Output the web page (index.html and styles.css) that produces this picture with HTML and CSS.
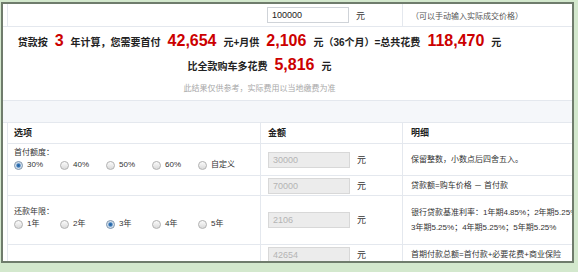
FILE: index.html
```html
<!DOCTYPE html>
<html lang="zh">
<head>
    <meta charset="UTF-8">
    <title>贷款购车计算</title>
    <link rel="stylesheet" href="styles.css">
</head>
<body>
    <div class="panel">
        <div class="top">
            <div></div>
            <div class="bl"></div>
            <div class="amount"><input class="price" type="text" value="100000"><span class="unit">元</span></div>
            <div class="bl tip">（可以手动输入实际成交价格）</div>
        </div>

        <div class="result">
            <p class="sum">贷款按<em>3</em>年计算，您需要首付<em>42,654</em>元+月供<em>2,106</em>元（36个月）=总共花费<em>118,470</em>元</p>
            <p class="more">比全款购车多花费<em>5,816</em>元</p>
            <p class="note">此结果仅供参考，实际费用以当地缴费为准</p>
        </div>

        <div class="band"></div>

        <table class="calc">
            <tr class="head">
                <td class="c1">选项</td>
                <td class="c2">金额</td>
                <td class="c3">明细</td>
            </tr>
            <tr class="r1">
                <td class="c1">
                    <div class="label">首付额度：</div>
                    <div class="opts">
                        <span class="opt"><i class="dot on"></i>30%</span>
                        <span class="opt"><i class="dot"></i>40%</span>
                        <span class="opt"><i class="dot"></i>50%</span>
                        <span class="opt"><i class="dot"></i>60%</span>
                        <span class="opt"><i class="dot"></i>自定义</span>
                    </div>
                </td>
                <td class="c2"><input class="val" type="text" value="30000" disabled><span class="unit">元</span></td>
                <td class="c3">保留整数，小数点后四舍五入。</td>
            </tr>
            <tr class="r2">
                <td class="c1"></td>
                <td class="c2"><input class="val" type="text" value="70000" disabled><span class="unit">元</span></td>
                <td class="c3">贷款额=购车价格 － 首付款</td>
            </tr>
            <tr class="r3">
                <td class="c1">
                    <div class="label">还款年限：</div>
                    <div class="opts">
                        <span class="opt"><i class="dot"></i>1年</span>
                        <span class="opt"><i class="dot"></i>2年</span>
                        <span class="opt"><i class="dot on"></i>3年</span>
                        <span class="opt"><i class="dot"></i>4年</span>
                        <span class="opt"><i class="dot"></i>5年</span>
                    </div>
                </td>
                <td class="c2"><input class="val" type="text" value="2106" disabled><span class="unit">元</span></td>
                <td class="c3 rate">
                    <div>银行贷款基准利率：1年期4.85%；2年期5.25%；</div>
                    <div>3年期5.25%；4年期5.25%；5年期5.25%</div>
                </td>
            </tr>
            <tr class="r4">
                <td class="c1"></td>
                <td class="c2"><input class="val" type="text" value="42654" disabled><span class="unit">元</span></td>
                <td class="c3">首期付款总额=首付款+必要花费+商业保险</td>
            </tr>
        </table>
    </div>
</body>
</html>
```

FILE: styles.css
```css
body {
    margin: 0;
    padding: 2px 0 0 1px;
    background-color: #d3e8cd;
    font-family: "Liberation Sans", "Noto Sans CJK SC", sans-serif;
    font-size: 8px;
    color: #333;
}
.panel {
    width: 573px;
    height: 261px;
    box-sizing: border-box;
    border: 2px solid #6f7c6c;
    background-color: #fff;
    overflow: hidden;
}
.top {
    display: grid;
    grid-template-columns: 4px 253px 142px 1fr;
    height: 22px;
    border-bottom: 1px solid #e4e8ee;
}
.top > div {
    display: flex;
    align-items: center;
}
.bl {
    border-left: 1px solid #e4e8ee;
}
.amount {
    padding-left: 7px;
}
.tip {
    padding-left: 8px;
    color: #555;
}
input {
    box-sizing: border-box;
    width: 82px;
    height: 16px;
    margin: 0;
    padding: 0 4px;
    font-family: "Liberation Sans", sans-serif;
    font-size: 9px;
}
.price {
    border: 1px solid #cfd3d8;
    color: #222;
    background-color: #fff;
}
.val {
    border: 1px solid #d8d8d8;
    color: #b4b4b4;
    background-color: #ececec;
    vertical-align: middle;
}
.unit {
    margin-left: 7px;
    font-size: 9px;
    color: #333;
    vertical-align: middle;
}
.result {
    height: 73px;
    border-bottom: 1px solid #e4e8ee;
    text-align: center;
    padding-right: 56px;
}
.result p {
    margin: 0;
    white-space: nowrap;
}
.sum, .more {
    font-size: 10px;
    font-weight: bold;
    color: #222;
    line-height: 22px;
}
.sum {
    padding-top: 3px;
}
.more {
    margin-top: 1px;
}
.result em {
    font-style: normal;
    font-size: 16px;
    font-weight: bold;
    color: #cc0000;
    margin: 0 7px;
}
.note {
    margin-top: 5px !important;
    line-height: 12px;
    color: #a8a8a8;
}
.band {
    height: 21px;
    background-color: #f5f7fa;
    border-bottom: 1px solid #e4e8ee;
}
.calc {
    margin-left: 4px;
    width: 566px;
    border-collapse: collapse;
    table-layout: fixed;
}
.calc td {
    border: 1px solid #e4e8ee;
    padding: 0;
    vertical-align: middle;
    white-space: nowrap;
    overflow: hidden;
    line-height: 12px;
}
.calc tr:first-child td {
    border-top: none;
}
.calc .c1 {
    width: 246px;
    padding-left: 6px;
    vertical-align: top;
}
.calc .c2 {
    width: 134px;
    padding-left: 7px;
}
.calc .c3 {
    padding-left: 8px;
}
.head td {
    height: 20px;
    font-weight: bold;
    font-size: 9px;
    color: #222;
    vertical-align: middle !important;
}
.r1 td { height: 28px; }
.r2 td { height: 19px; }
.r3 td { height: 38px; }
.r4 td { height: 19px; }
.r1 .c1 { padding-top: 3px; }
.r3 .c1 { padding-top: 10px; }
.label {
    line-height: 12px;
}
.opts {
    display: flex;
    line-height: 12px;
}
.opt {
    display: inline-flex;
    align-items: center;
    width: 46px;
    flex-shrink: 0;
}
.dot {
    display: inline-block;
    box-sizing: border-box;
    width: 9px;
    height: 9px;
    margin-right: 4px;
    border: 1px solid #b3b3b3;
    border-radius: 50%;
    background: linear-gradient(#fbfbfb, #dadada);
}
.dot.on {
    border-color: #7e95ad;
    background: radial-gradient(circle, #235f9c 0, #3b7bbb 1.6px, #c9d8e8 2.6px, #eef2f6 4px);
}
.rate div {
    line-height: 15px;
}
```
